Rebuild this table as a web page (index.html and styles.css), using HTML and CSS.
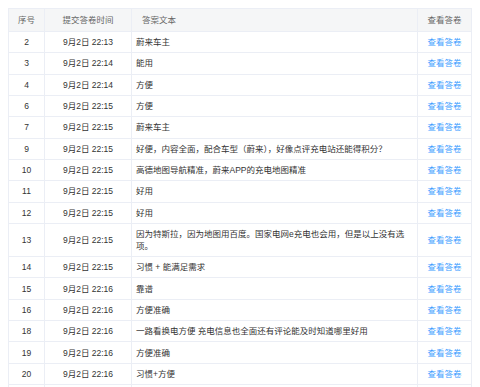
FILE: index.html
```html
<!DOCTYPE html>
<html lang="zh-CN">
<head>
    <meta charset="UTF-8">
    <meta name="viewport" content="width=device-width, initial-scale=1.0">
    <title>答卷列表</title>
    <link rel="stylesheet" href="styles.css">
</head>
<body>
    <table class="answer-table">
        <colgroup>
            <col class="col-no">
            <col class="col-time">
            <col class="col-text">
            <col class="col-view">
        </colgroup>
        <thead>
            <tr>
                <th>序号</th>
                <th>提交答卷时间</th>
                <th class="th-text">答案文本</th>
                <th>查看答卷</th>
            </tr>
        </thead>
        <tbody>
            <tr><td class="c">2</td><td class="c">9月2日 22:13</td><td>蔚来车主</td><td class="c"><a href="#">查看答卷</a></td></tr>
            <tr><td class="c">3</td><td class="c">9月2日 22:14</td><td>能用</td><td class="c"><a href="#">查看答卷</a></td></tr>
            <tr><td class="c">4</td><td class="c">9月2日 22:14</td><td>方便</td><td class="c"><a href="#">查看答卷</a></td></tr>
            <tr><td class="c">6</td><td class="c">9月2日 22:15</td><td>方便</td><td class="c"><a href="#">查看答卷</a></td></tr>
            <tr><td class="c">7</td><td class="c">9月2日 22:15</td><td>蔚来车主</td><td class="c"><a href="#">查看答卷</a></td></tr>
            <tr><td class="c">9</td><td class="c">9月2日 22:15</td><td>好便，内容全面，配合车型（蔚来），好像点评充电站还能得积分？</td><td class="c"><a href="#">查看答卷</a></td></tr>
            <tr><td class="c">10</td><td class="c">9月2日 22:15</td><td>高德地图导航精准，蔚来APP的充电地图精准</td><td class="c"><a href="#">查看答卷</a></td></tr>
            <tr><td class="c">11</td><td class="c">9月2日 22:15</td><td>好用</td><td class="c"><a href="#">查看答卷</a></td></tr>
            <tr><td class="c">12</td><td class="c">9月2日 22:15</td><td>好用</td><td class="c"><a href="#">查看答卷</a></td></tr>
            <tr><td class="c">13</td><td class="c">9月2日 22:15</td><td>因为特斯拉，因为地图用百度。国家电网e充电也会用，但是以上没有选项。</td><td class="c"><a href="#">查看答卷</a></td></tr>
            <tr><td class="c">14</td><td class="c">9月2日 22:15</td><td>习惯 + 能满足需求</td><td class="c"><a href="#">查看答卷</a></td></tr>
            <tr><td class="c">15</td><td class="c">9月2日 22:16</td><td>靠谱</td><td class="c"><a href="#">查看答卷</a></td></tr>
            <tr><td class="c">16</td><td class="c">9月2日 22:16</td><td>方便准确</td><td class="c"><a href="#">查看答卷</a></td></tr>
            <tr><td class="c">18</td><td class="c">9月2日 22:16</td><td>一路看换电方便 充电信息也全面还有评论能及时知道哪里好用</td><td class="c"><a href="#">查看答卷</a></td></tr>
            <tr><td class="c">19</td><td class="c">9月2日 22:16</td><td>方便准确</td><td class="c"><a href="#">查看答卷</a></td></tr>
            <tr><td class="c">20</td><td class="c">9月2日 22:16</td><td>习惯+方便</td><td class="c"><a href="#">查看答卷</a></td></tr>
            <tr class="row-empty"><td></td><td></td><td></td><td></td></tr>
        </tbody>
    </table>
</body>
</html>
```

FILE: styles.css
```css
html {
    overflow: hidden;
}
body {
    margin: 0;
    padding: 8px;
    background-color: #fff;
    font-family: "Liberation Sans", "Noto Sans CJK SC", sans-serif;
    font-size: 8.5px;
    color: #333;
}
.answer-table {
    width: 463px;
    table-layout: fixed;
    border-collapse: collapse;
    border: 1px solid #ebeef5;
}
.col-no {
    width: 36px;
}
.col-time {
    width: 87px;
}
.col-text {
    width: 286px;
}
.col-view {
    width: 54px;
}
th {
    background-color: #f5f6f7;
    color: #666;
    font-weight: normal;
    line-height: 12px;
    padding: 5px 4px;
    text-align: center;
    border: 1px solid #ebeef5;
}
th.th-text {
    text-align: left;
    padding-left: 10px;
}
td {
    line-height: 12px;
    padding: 4.17px 8px 4.17px 4px;
    border: 1px solid #ebeef5;
    vertical-align: middle;
}
td.c {
    text-align: center;
    padding-left: 2px;
    padding-right: 2px;
}
.row-empty td {
    height: 12px;
}
a {
    color: #409eff;
    text-decoration: none;
}
```
